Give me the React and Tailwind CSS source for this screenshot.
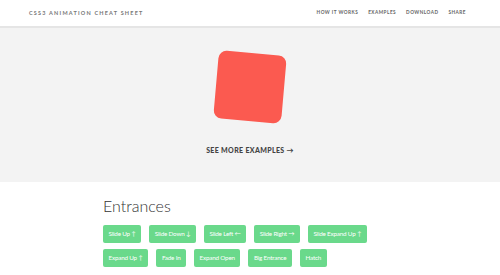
const ROW_ONE = ['Slide Up ↑', 'Slide Down ↓', 'Slide Left ←', 'Slide Right →', 'Slide Expand Up ↑'];
const ROW_TWO = ['Expand Up ↑', 'Fade In', 'Expand Open', 'Big Entrance', 'Hatch'];

const NAV = ['How it works', 'Examples', 'Download', 'Share'];

function AnimButton({ label }) {
  return (
    <button className="h-[18px] px-[5.5px] rounded-[2px] bg-[#6ad98b] text-white text-[6.3px] tracking-[-0.03em] leading-none whitespace-nowrap">
      {label}
    </button>
  );
}

export default function App() {
  return (
    <div className="w-[500px] h-[275px] overflow-hidden bg-white font-['Lato',sans-serif]">
      <header className="h-[28px] flex items-center justify-between pl-[29px] pr-[34px] border-b-2 border-[#e5e5e5] bg-white">
        <div className="text-[5.5px] font-bold tracking-[0.22em] text-[#777] uppercase">
          CSS3 Animation Cheat Sheet
        </div>
        <nav className="flex gap-[10px] text-[4.7px] font-bold tracking-[0.1em] text-[#666] uppercase">
          {NAV.map((n) => (
            <span key={n}>{n}</span>
          ))}
        </nav>
      </header>

      <section className="h-[154px] bg-[#f3f3f3] flex flex-col items-center">
        <div className="mt-[25px] w-[68px] h-[68px] rounded-[8px] bg-[#fb5a50] rotate-[5deg]" />
        <div className="mt-[24px] text-[7px] font-black tracking-[0.05em] text-[#444] uppercase">
          See more examples →
        </div>
      </section>

      <section className="w-[294px] mx-auto pt-[16px]">
        <h2 className="text-[16px] font-light text-[#333] leading-none">Entrances</h2>
        <div className="mt-[11px] flex flex-col gap-[6px]">
          <div className="flex gap-[8px]">
            {ROW_ONE.map((l) => (
              <AnimButton key={l} label={l} />
            ))}
          </div>
          <div className="flex gap-[8px]">
            {ROW_TWO.map((l) => (
              <AnimButton key={l} label={l} />
            ))}
          </div>
        </div>
      </section>
    </div>
  );
}
